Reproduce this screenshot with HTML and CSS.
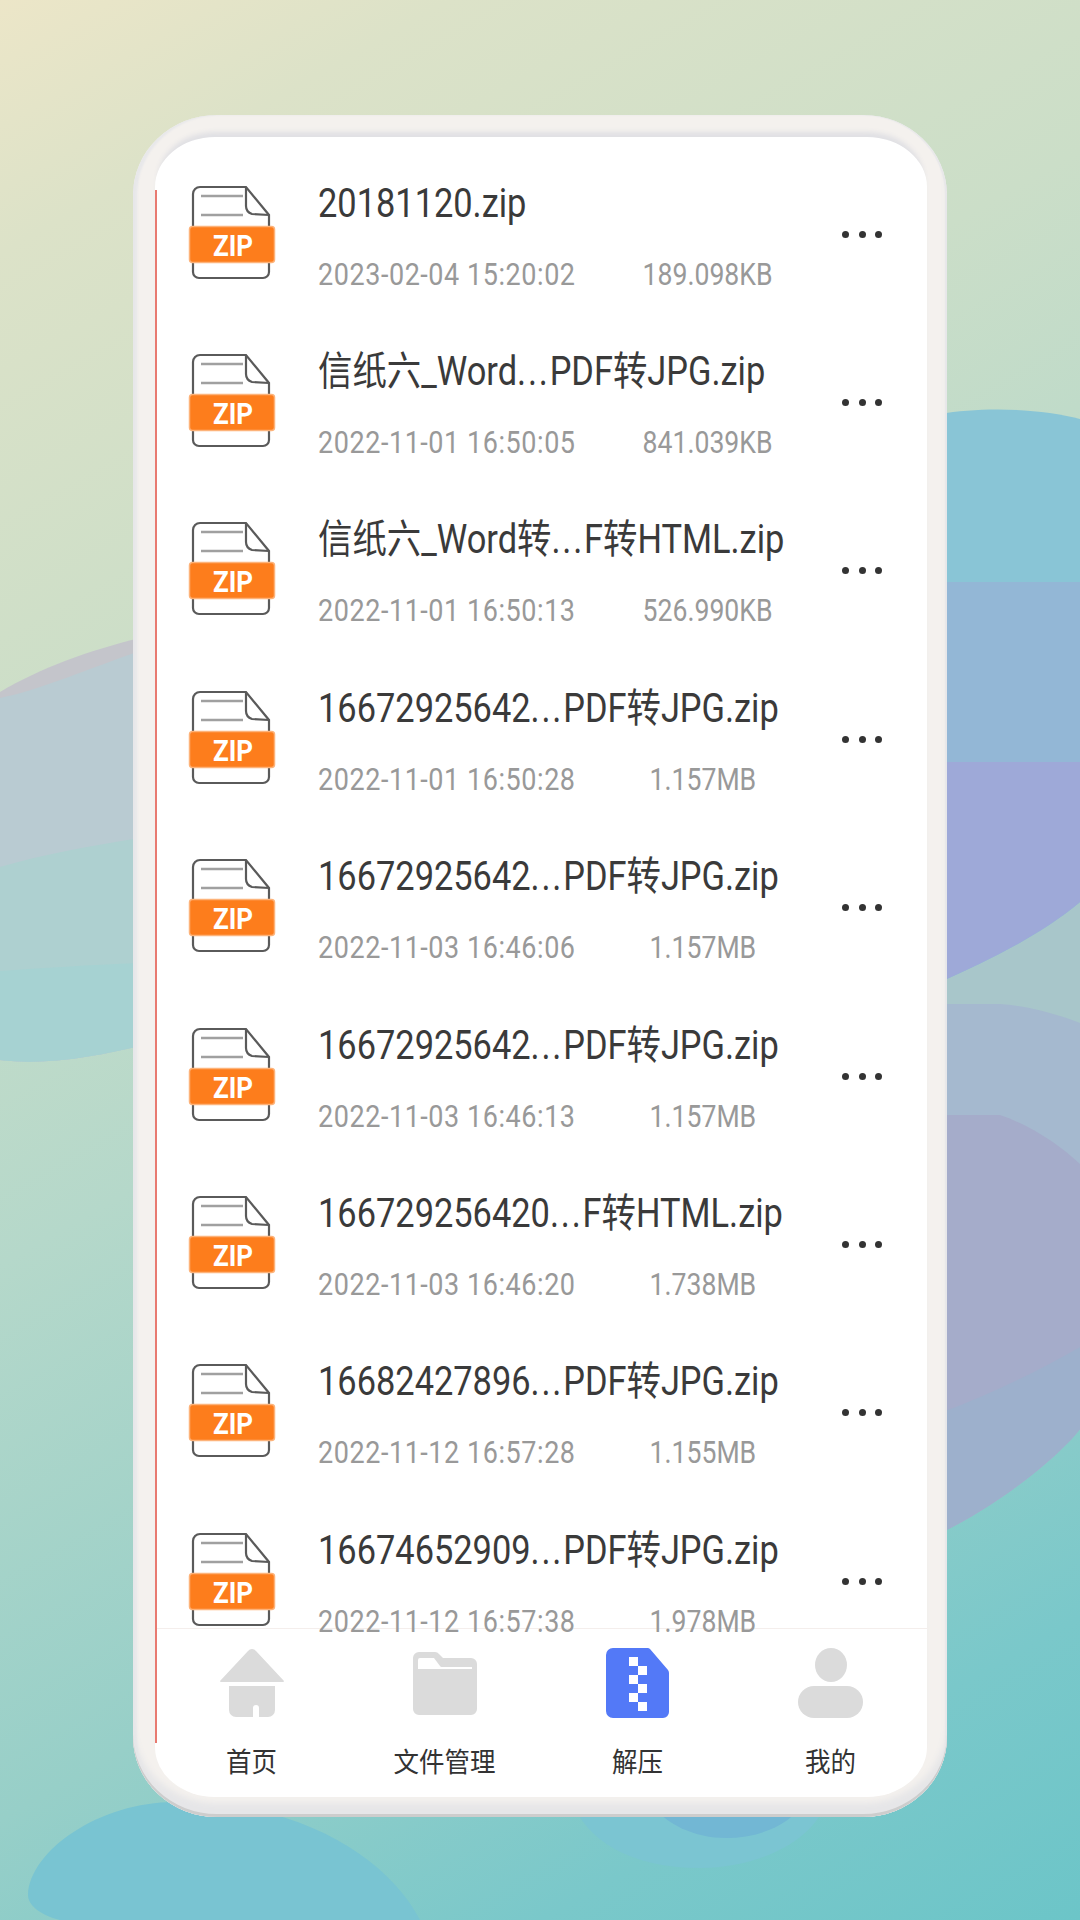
FILE: index.html
```html
<!DOCTYPE html>
<html lang="zh-CN">
<head>
<meta charset="utf-8">
<title>解压</title>
<link rel="stylesheet" href="styles.css">
</head>
<body>
<svg class="backdrop" viewBox="0 0 1080 1920" aria-hidden="true">
  <defs>
    <linearGradient id="bg" gradientUnits="userSpaceOnUse" x1="0" y1="0" x2="1080" y2="1920">
      <stop offset="0" stop-color="#ece6c8"/>
      <stop offset="0.1" stop-color="#dce2c8"/>
      <stop offset="0.3" stop-color="#cbdec8"/>
      <stop offset="0.5" stop-color="#b5d8ca"/>
      <stop offset="0.72" stop-color="#97cfc8"/>
      <stop offset="0.88" stop-color="#7ac8ca"/>
      <stop offset="1" stop-color="#6cc5c8"/>
    </linearGradient>
  </defs>
  <rect width="1080" height="1920" fill="url(#bg)"/>
  <path d="M0 692C40 668 90 650 140 638V1046C100 1055 50 1066 0 1060Z" fill="#c4c5cb"/>
  <path d="M0 698C40 690 90 668 140 651V1046C100 1055 50 1066 0 1060Z" fill="#b9cbd2"/>
  <path d="M0 867C40 855 90 846 140 838V1046C100 1055 50 1066 0 1060Z" fill="#aed0d0"/>
  <path d="M0 971C40 968 90 965 140 963V1046C100 1055 50 1066 0 1060Z" fill="#a6d2d2"/>
  <path d="M940 880H1080V1300H940Z" fill="#a8c6ca"/>
  <path d="M940 414C980 407 1040 408 1080 419V902C1040 935 990 960 940 982Z" fill="#89c5d6"/>
  <path d="M940 582H1080V902C1040 935 990 960 940 982Z" fill="#93b7d6"/>
  <path d="M940 762H1080V902C1040 935 990 960 940 982Z" fill="#9ea9d8"/>
  <path d="M940 1004H1000C1030 1006 1060 1015 1080 1023V1429C1060 1455 1000 1505 940 1533Z" fill="#a5b9cf"/>
  <path d="M940 1115H1000C1030 1125 1060 1145 1080 1164V1429C1060 1455 1000 1505 940 1533Z" fill="#a5acca"/>
  <path d="M940 1413C990 1395 1040 1370 1080 1347V1429C1060 1455 1000 1505 940 1533Z" fill="#9db0cc"/>
  <path d="M28 1895C30 1850 100 1802 175 1802C300 1800 390 1860 420 1920H60C40 1915 28 1905 28 1895Z" fill="#79c4d2"/>
  <path d="M572 1800H827C815 1840 760 1868 700 1868C630 1868 585 1840 572 1800Z" fill="#7bc5d2"/>
  <path d="M648 1800H807C790 1825 760 1838 726 1838C695 1838 665 1825 648 1800Z" fill="#72b7d4"/>
</svg>

<svg class="sprites" aria-hidden="true">
  <symbol id="zip" viewBox="0 0 88 96">
    <path class="zip-outline" d="M12 2H58L81 30V87a6 6 0 0 1-6 6H11a6 6 0 0 1-6-6V9a7 7 0 0 1 7-7Z"/>
    <path class="zip-outline" d="M58 2V21c0 5 3 7 6 8L81 30"/>
    <path class="zip-line" d="M13 11H55M13 30H55"/>
    <rect class="zip-band" x="1.5" y="41.5" width="85" height="36" rx="3"/>
    <text class="zip-text" x="45" y="62" transform="scale(1 1.15)">ZIP</text>
  </symbol>
</svg>

<main class="phone">
  <div class="screen">
    <span class="edge-line"></span>
    <ul class="list">
      <li class="row">
        <svg class="file-icon"><use href="#zip"/></svg>
        <div class="info">
          <p class="title">20181120.zip</p>
          <p class="meta"><span class="time">2023-02-04 15:20:02</span><span class="size">189.098KB</span></p>
        </div>
        <span class="more"><i></i><i></i><i></i></span>
      </li>
      <li class="row">
        <svg class="file-icon"><use href="#zip"/></svg>
        <div class="info">
          <p class="title">信纸六_Word<span class="dots">...</span>PDF转JPG.zip</p>
          <p class="meta"><span class="time">2022-11-01 16:50:05</span><span class="size">841.039KB</span></p>
        </div>
        <span class="more"><i></i><i></i><i></i></span>
      </li>
      <li class="row">
        <svg class="file-icon"><use href="#zip"/></svg>
        <div class="info">
          <p class="title">信纸六_Word转<span class="dots">...</span>F转HTML.zip</p>
          <p class="meta"><span class="time">2022-11-01 16:50:13</span><span class="size">526.990KB</span></p>
        </div>
        <span class="more"><i></i><i></i><i></i></span>
      </li>
      <li class="row">
        <svg class="file-icon"><use href="#zip"/></svg>
        <div class="info">
          <p class="title">16672925642<span class="dots">...</span>PDF转JPG.zip</p>
          <p class="meta"><span class="time">2022-11-01 16:50:28</span><span class="size size-mb">1.157MB</span></p>
        </div>
        <span class="more"><i></i><i></i><i></i></span>
      </li>
      <li class="row">
        <svg class="file-icon"><use href="#zip"/></svg>
        <div class="info">
          <p class="title">16672925642<span class="dots">...</span>PDF转JPG.zip</p>
          <p class="meta"><span class="time">2022-11-03 16:46:06</span><span class="size size-mb">1.157MB</span></p>
        </div>
        <span class="more"><i></i><i></i><i></i></span>
      </li>
      <li class="row">
        <svg class="file-icon"><use href="#zip"/></svg>
        <div class="info">
          <p class="title">16672925642<span class="dots">...</span>PDF转JPG.zip</p>
          <p class="meta"><span class="time">2022-11-03 16:46:13</span><span class="size size-mb">1.157MB</span></p>
        </div>
        <span class="more"><i></i><i></i><i></i></span>
      </li>
      <li class="row">
        <svg class="file-icon"><use href="#zip"/></svg>
        <div class="info">
          <p class="title">166729256420<span class="dots">...</span>F转HTML.zip</p>
          <p class="meta"><span class="time">2022-11-03 16:46:20</span><span class="size size-mb">1.738MB</span></p>
        </div>
        <span class="more"><i></i><i></i><i></i></span>
      </li>
      <li class="row">
        <svg class="file-icon"><use href="#zip"/></svg>
        <div class="info">
          <p class="title">16682427896<span class="dots">...</span>PDF转JPG.zip</p>
          <p class="meta"><span class="time">2022-11-12 16:57:28</span><span class="size size-mb">1.155MB</span></p>
        </div>
        <span class="more"><i></i><i></i><i></i></span>
      </li>
      <li class="row">
        <svg class="file-icon"><use href="#zip"/></svg>
        <div class="info">
          <p class="title">16674652909<span class="dots">...</span>PDF转JPG.zip</p>
          <p class="meta"><span class="time">2022-11-12 16:57:38</span><span class="size size-mb">1.978MB</span></p>
        </div>
        <span class="more"><i></i><i></i><i></i></span>
      </li>
    </ul>
    <nav class="tabs">
      <a class="tab">
        <svg class="tab-icon" viewBox="0 0 72 72">
          <path class="grey" d="M32 3a5 5 0 0 1 8 0L68 33a1 1 0 0 1-1 1H5a1 1 0 0 1-1-1Z"/>
          <path class="grey" d="M13 38H59V62a7 7 0 0 1-7 7H43V60a3 3 0 0 0-3-3a3 3 0 0 0-3 3V69H20a7 7 0 0 1-7-7Z"/>
        </svg>
        <span class="tab-label">首页</span>
      </a>
      <a class="tab">
        <svg class="tab-icon" viewBox="0 0 72 72">
          <path class="grey" d="M10 4H26a5 5 0 0 1 4 2L34 10H62a6 6 0 0 1 6 6V61a6 6 0 0 1-6 6H10a6 6 0 0 1-6-6V10a6 6 0 0 1 6-6Z"/>
          <path class="cut" d="M9 12a2 2 0 0 1 2-2H25L31 18a2 2 0 0 0 2 1H63V21H9Z"/>
        </svg>
        <span class="tab-label">文件管理</span>
      </a>
      <a class="tab">
        <svg class="tab-icon" viewBox="0 0 72 72">
          <path class="blue" d="M11 0H45a4 4 0 0 1 3 1L66 22a5 5 0 0 1 1 3V64a6 6 0 0 1-6 6H11a7 7 0 0 1-7-7V7a7 7 0 0 1 7-7Z"/>
          <path class="cut" d="M27 9h9v9h-9ZM36 18h9v9h-9ZM27 27h9v9h-9ZM36 36h9v9h-9ZM27 45h9v9h-9ZM36 54h9v9h-9Z"/>
        </svg>
        <span class="tab-label">解压</span>
      </a>
      <a class="tab">
        <svg class="tab-icon" viewBox="0 0 72 72">
          <ellipse class="grey" cx="36" cy="17" rx="16" ry="17"/>
          <rect class="grey" x="3" y="38" width="65" height="32" rx="16"/>
        </svg>
        <span class="tab-label">我的</span>
      </a>
    </nav>
  </div>
</main>
</body>
</html>
```

FILE: styles.css
```css
* { box-sizing: border-box; }
html, body { margin: 0; padding: 0; }
body {
  position: relative;
  width: 1080px;
  height: 1920px;
  overflow: hidden;
  padding: 115px 133px 103px;
  font-family: Roboto, "Noto Sans CJK SC", sans-serif;
}
.backdrop { position: absolute; inset: 0; width: 1080px; height: 1920px; }
.sprites { display: none; }

.phone {
  position: relative;
  width: 814px;
  height: 1702px;
  padding: 22px 20px 20px 22px;
  border-radius: 84px / 80px;
  background: #f4f1ee;
  box-shadow:
    inset 0 -3px 0 #cdcdcd,
    inset 0 -14px 6px #e6e6e8,
    inset 4px 0 2px #e8e8ea,
    inset -2px 0 1px #e8e8ea;
}
.screen {
  position: relative;
  display: flex;
  flex-direction: column;
  height: 100%;
  border-radius: 60px / 50px;
  background: #fff;
  box-shadow: 0 -8px 5px -3px #e0e0e4;
}
.edge-line {
  position: absolute;
  left: 0;
  top: 53px;
  width: 1.5px;
  height: 1553px;
  background: #e87a70;
  z-index: 2;
}

.list {
  flex: 1;
  min-height: 0;
  margin: 0;
  padding: 13px 45px 0 35px;
  list-style: none;
}
.row {
  display: flex;
  align-items: center;
  height: 168.4px;
}
.file-icon { width: 88px; height: 96px; flex: none; margin: -3px 0 0 -2px; }
.zip-outline { fill: none; stroke: #5a5a5a; stroke-width: 2.2; }
.zip-line { fill: none; stroke: #a0a0a0; stroke-width: 2.4; }
.zip-band { fill: #fd7d1c; stroke: #fdb37a; stroke-width: 1.5; }
.zip-text {
  fill: #fff;
  font-family: Roboto, sans-serif;
  font-weight: 700;
  font-size: 26px;
  text-anchor: middle;
}

.info { flex: 1; min-width: 0; margin-left: 42px; padding-top: 6px; }
.title, .meta { margin: 0; white-space: nowrap; transform: scaleY(1.16); }
.title {
  height: 40px;
  margin-top: -1px;
  line-height: 40px;
  font-size: 34.4px;
  color: #3a3a3a;
}
.dots { letter-spacing: 1.8px; }
.meta {
  display: flex;
  height: 32px;
  margin-top: 36px;
  line-height: 32px;
  font-size: 27px;
  color: #999;
}
.time { letter-spacing: 0.55px; }
.size { margin-left: 67px; font-size: 26.6px; }
.size-mb { margin-left: 74px; }

.more { display: flex; gap: 9.5px; flex: none; }
.more i { width: 7px; height: 7px; border-radius: 50%; background: #333; }

.tabs {
  display: grid;
  grid-template-columns: repeat(4, 1fr);
  height: 169px;
  flex: none;
  padding-top: 19px;
  border-top: 1px solid #f4eeec;
}
.tab { display: flex; flex-direction: column; align-items: center; }
.tab-icon { width: 72px; height: 72px; }
.grey { fill: #dbdbdb; }
.blue { fill: #5379f7; }
.cut { fill: #fff; }
.tab-label {
  margin-top: 24px;
  line-height: 32px;
  font-size: 25.5px;
  font-family: "Noto Sans CJK SC", sans-serif;
  color: #333;
  transform: scaleY(1.08);
}
```
